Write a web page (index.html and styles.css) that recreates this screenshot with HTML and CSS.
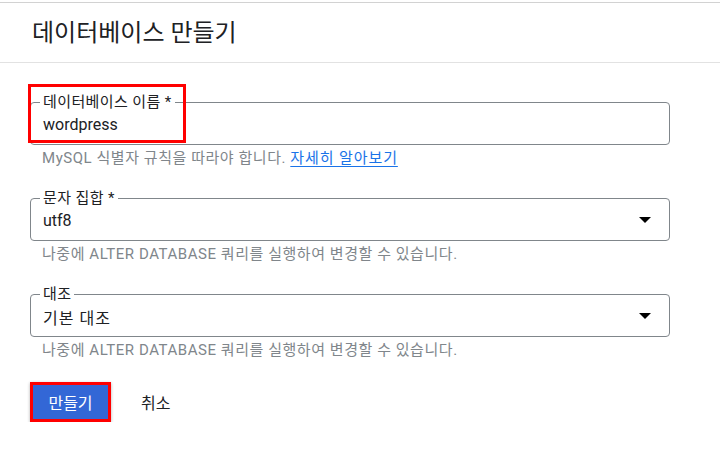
FILE: index.html
```html
<!DOCTYPE html>
<html lang="ko">
<head>
<meta charset="utf-8">
<link rel="stylesheet" href="styles.css">
</head>
<body>
<div class="page">
  <header class="header">
    <h1 class="title">데이터베이스 만들기</h1>
  </header>
  <main class="form">
    <div class="field">
      <div class="outline">
        <span class="label">데이터베이스 이름 *</span>
        <span class="value">wordpress</span>
        <span class="mark mark-field"></span>
      </div>
      <p class="hint">MySQL 식별자 규칙을 따라야 합니다. <a class="link" href="#">자세히 알아보기</a></p>
    </div>
    <div class="field">
      <div class="outline">
        <span class="label">문자 집합 *</span>
        <span class="value">utf8</span>
        <span class="arrow"></span>
      </div>
      <p class="hint">나중에 ALTER DATABASE 쿼리를 실행하여 변경할 수 있습니다.</p>
    </div>
    <div class="field">
      <div class="outline">
        <span class="label">대조</span>
        <span class="value value-ko">기본 대조</span>
        <span class="arrow"></span>
      </div>
      <p class="hint">나중에 ALTER DATABASE 쿼리를 실행하여 변경할 수 있습니다.</p>
    </div>
    <div class="actions">
      <button class="btn-primary">만들기</button>
      <button class="btn-text">취소</button>
    </div>
  </main>
</div>
</body>
</html>
```
FILE: styles.css
```css
html, body {
  margin: 0;
  padding: 0;
  background: #ffffff;
}
body {
  font-family: Roboto, "Noto Sans CJK KR", sans-serif;
  color: #202124;
}
.page {
  padding-top: 2px;
}
.header {
  border-top: 1px solid #d2d2d2;
  border-bottom: 1px solid #e2e2e2;
  height: 59px;
  display: flex;
  align-items: center;
  padding-left: 32px;
}
.title {
  margin: 0;
  font-size: 24px;
  font-weight: 400;
  color: #202124;
  line-height: 30px;
  letter-spacing: 0;
}
.form {
  padding: 39px 0 0 30px;
  width: 640px;
}
.field + .field {
  margin-top: 31px;
}
.outline {
  position: relative;
  height: 41px;
  border: 1px solid #80868b;
  border-radius: 4px;
  display: flex;
  align-items: center;
  padding: 0 12px;
}
.label {
  position: absolute;
  left: 9px;
  top: -9px;
  padding: 0 3px;
  background: #fff;
  font-size: 15px;
  line-height: 16px;
  letter-spacing: 0.4px;
  color: #202124;
}
.value {
  font-size: 16px;
  color: #202124;
  margin-top: 2px;
}
.value-ko {
  letter-spacing: 1px;
}
.arrow {
  margin-left: auto;
  margin-right: 6px;
  width: 0;
  height: 0;
  border-left: 6px solid transparent;
  border-right: 6px solid transparent;
  border-top: 6px solid #000;
}
.mark {
  position: absolute;
  border: 3px solid #ff0000;
  pointer-events: none;
}
.mark-field {
  left: -3px;
  top: -19px;
  width: 152px;
  height: 53px;
}
.hint {
  margin: 4px 0 0 12px;
  font-size: 15px;
  line-height: 18px;
  letter-spacing: 0.55px;
  color: #80868b;
}
.link {
  color: #1a73e8;
  text-decoration: underline;
  text-underline-offset: 3px;
  letter-spacing: 0.9px;
}
.actions {
  display: flex;
  align-items: center;
  gap: 30px;
  margin-top: 23px;
}
.btn-primary {
  box-sizing: border-box;
  width: 81px;
  height: 40px;
  background: #3367d6;
  color: #fff;
  border: 3px solid #ff0000;
  font-family: inherit;
  font-size: 16px;
  box-shadow: 0 1px 3px rgba(0,0,0,0.3);
  padding: 0;
}
.btn-text {
  background: none;
  border: none;
  font-family: inherit;
  font-size: 16px;
  color: #202124;
  padding: 0;
}
```
